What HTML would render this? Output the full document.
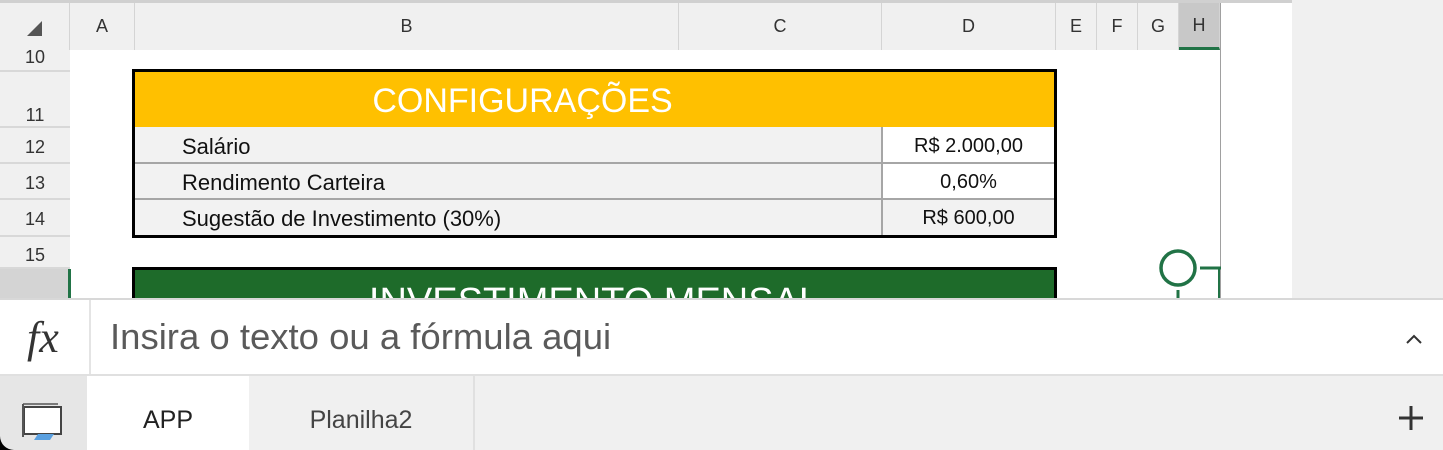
<!DOCTYPE html>
<html><head><meta charset="utf-8"><style>
*{margin:0;padding:0;box-sizing:border-box}
body{width:1443px;height:450px;overflow:hidden;background:#fff;font-family:"Liberation Sans",sans-serif;position:relative}
.a{position:absolute}
.hd{position:absolute;top:3px;height:47px;background:#f0f0f0;border-right:1px solid #d4d4d4;color:#333;font-size:18px;display:flex;align-items:center;justify-content:center}
.rn{position:absolute;left:0;width:70px;background:#f0f0f0;border-bottom:2px solid #d8d8d8;color:#333;font-size:18px;text-align:center}
.cell{position:absolute;font-size:22px;color:#111;display:flex;align-items:center}
</style></head><body>
<div class="a" style="left:0;top:0;width:1292px;height:3px;background:#d0d0d0"></div>
<div class="a" style="left:1292px;top:0;width:151px;height:298px;background:#f0f0f0"></div>
<div class="hd" style="left:0;width:70px"><svg width="20" height="20" style="margin-top:4px"><polygon points="17,2 17,17 2,17" fill="#555"/></svg></div>
<div class="hd" style="left:70px;width:65px">A</div>
<div class="hd" style="left:135px;width:544px">B</div>
<div class="hd" style="left:679px;width:203px">C</div>
<div class="hd" style="left:882px;width:174px">D</div>
<div class="hd" style="left:1056px;width:41px">E</div>
<div class="hd" style="left:1097px;width:41px">F</div>
<div class="hd" style="left:1138px;width:41px">G</div>
<div class="hd" style="left:1179px;width:41px;background:#c8c8c8;border-bottom:3px solid #217346">H</div>
<div class="a" style="left:1220px;top:3px;width:1px;height:295px;background:#a0a0a0"></div>
<div class="rn" style="top:50px;height:22px;line-height:14px">10</div>
<div class="rn" style="top:72px;height:56px;padding-top:33px">11</div>
<div class="rn" style="top:128px;height:36px;line-height:38px">12</div>
<div class="rn" style="top:164px;height:36px;line-height:38px">13</div>
<div class="rn" style="top:200px;height:37px;line-height:39px">14</div>
<div class="rn" style="top:237px;height:32px;line-height:36px">15</div>
<div class="rn" style="top:269px;height:29px;background:#d4d4d4;border:none"></div>
<div class="a" style="left:68px;top:269px;width:3px;height:29px;background:#217346"></div>
<!-- config table -->
<div class="a" style="left:132px;top:69px;width:925px;height:169px;border:3px solid #000;background:#f2f2f2"></div>
<div class="a" style="left:135px;top:72px;width:919px;height:55px;background:#ffc000;color:#fff;font-size:34px;display:flex;align-items:center;justify-content:center;padding-right:144px;padding-top:4px">CONFIGURAÇÕES</div>
<div class="a" style="left:882px;top:127px;width:172px;height:72px;background:#fff"></div>
<div class="a" style="left:881px;top:127px;width:2px;height:108px;background:#a6a6a6"></div>
<div class="a" style="left:135px;top:162px;width:919px;height:2px;background:#a6a6a6"></div>
<div class="a" style="left:135px;top:198px;width:919px;height:2px;background:#a6a6a6"></div>
<div class="cell" style="left:182px;top:129px;height:35px">Salário</div>
<div class="cell" style="left:182px;top:165px;height:35px">Rendimento Carteira</div>
<div class="cell" style="left:182px;top:201px;height:35px">Sugestão de Investimento (30%)</div>
<div class="cell" style="left:883px;width:171px;top:129px;height:35px;justify-content:center;font-size:20px">R$ 2.000,00</div>
<div class="cell" style="left:883px;width:171px;top:165px;height:35px;justify-content:center;font-size:20px">0,60%</div>
<div class="cell" style="left:883px;width:171px;top:201px;height:35px;justify-content:center;font-size:20px">R$ 600,00</div>
<!-- green table -->
<div class="a" style="left:132px;top:267px;width:925px;height:40px;border:3px solid #000;background:#1e6b2a;overflow:hidden"><div style="color:#fff;font-size:38px;text-align:center;padding-right:0;margin-top:11px;white-space:nowrap">INVESTIMENTO MENSAL</div></div>
<svg class="a" style="left:1155px;top:248px" width="66" height="50"><circle cx="23" cy="20" r="17" fill="none" stroke="#217346" stroke-width="3.5"/><line x1="45" y1="20" x2="66" y2="20" stroke="#217346" stroke-width="3"/><line x1="23" y1="42" x2="23" y2="50" stroke="#217346" stroke-width="3"/><line x1="64" y1="20" x2="64" y2="50" stroke="#217346" stroke-width="2"/></svg>
<!-- formula bar -->
<div class="a" style="left:0;top:298px;width:1443px;height:78px;background:#fff;border-top:2px solid #d8d8d8;border-bottom:2px solid #e0e0e0"></div>
<div class="a" style="left:89px;top:300px;width:2px;height:74px;background:#e4e4e4"></div>
<div class="a" style="left:27px;top:312px;font-family:'Liberation Serif',serif;font-style:italic;font-size:44px;color:#333">fx</div>
<div class="a" style="left:110px;top:316px;font-size:36.5px;color:#5a5a5a">Insira o texto ou a fórmula aqui</div>
<svg class="a" style="left:1404px;top:332px" width="20" height="14"><polyline points="3,11 10,4 17,11" fill="none" stroke="#333" stroke-width="2"/></svg>
<!-- tab bar -->
<div class="a" style="left:0;top:376px;width:1443px;height:74px;background:#f0f0f0"></div>
<div class="a" style="left:0;top:376px;width:87px;height:74px;background:#e6e6e6"></div>
<svg class="a" style="left:20px;top:402px" width="46" height="44"><rect x="4" y="5" width="37" height="27" fill="#fff" stroke="#444" stroke-width="2"/><line x1="3" y1="2" x2="3" y2="35" stroke="#555" stroke-width="2"/><line x1="3" y1="2" x2="38" y2="2" stroke="#555" stroke-width="1.5"/><polygon points="18,32 34,32 30,38 14,38" fill="#5aa0e0"/></svg>
<div class="a" style="left:87px;top:376px;width:162px;height:74px;background:#fff;font-size:25px;color:#222;display:flex;align-items:center;justify-content:center;padding-top:14px">APP</div>
<div class="a" style="left:249px;top:376px;width:226px;height:74px;border-right:2px solid #e0e0e0;font-size:25px;color:#444;display:flex;align-items:center;justify-content:center;padding-top:14px">Planilha2</div>
<svg class="a" style="left:1398px;top:405px" width="26" height="26"><path d="M13 1V25M1 13H25" stroke="#333" stroke-width="3"/></svg>
<svg class="a" style="left:0;top:420px" width="14" height="30"><path d="M0 0V30H14A14 14 0 0 1 0 16Z" fill="#000"/></svg>
</body></html>
